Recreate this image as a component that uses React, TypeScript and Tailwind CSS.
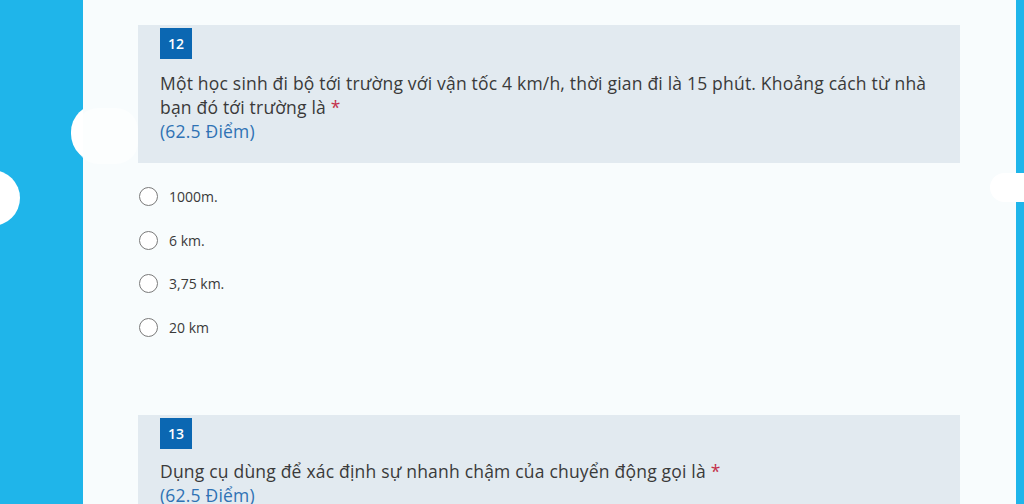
import React from "react";

const font = { fontFamily: '"Open Sans", "Noto Sans", sans-serif' };

function Badge({ n }: { n: string }) {
  return (
    <div className="flex h-[31px] w-[32px] items-center justify-center bg-[#0b67b2] text-[14px] font-semibold text-white">
      {n}
    </div>
  );
}

function Radio({ label }: { label: string }) {
  return (
    <div className="flex h-[43.5px] items-center">
      <div className="ml-[1px] h-[19px] w-[19px] rounded-full border-[1.5px] border-[#7a7a7a] bg-white" />
      <span className="ml-[11px] text-[14px] text-[#3a3a3a]">{label}</span>
    </div>
  );
}

export default function App() {
  return (
    <div
      className="relative flex h-[504px] w-[1024px] overflow-hidden bg-[#1fb5ea]"
      style={font}
    >
      <div className="w-[83px] shrink-0" />
      <div className="relative z-10 w-[933px] shrink-0 bg-[#f8fcfd] pl-[55px] pr-[56px] pt-[25px]">
        <div className="h-[138px] bg-[#e2eaf0] pl-[22px] pt-[3px]">
          <Badge n="12" />
          <div className="mt-[12px] text-[17.5px] leading-[24px] tracking-[0.2px] text-[#3a3a3a]">
            <div className="whitespace-nowrap">
              Một học sinh đi bộ tới trường với vận tốc 4 km/h, thời gian đi là 15 phút. Khoảng cách từ nhà
            </div>
            <div className="whitespace-nowrap">
              bạn đó tới trường là <span className="text-[#c4314b]">*</span>
            </div>
            <div className="text-[#2f72b4]">(62.5 Điểm)</div>
          </div>
        </div>
        <div className="mt-[12px]">
          <Radio label="1000m." />
          <Radio label="6 km." />
          <Radio label="3,75 km." />
          <Radio label="20 km" />
        </div>
        <div className="mt-[66px] h-[200px] bg-[#e2eaf0] pl-[22px] pt-[3px]">
          <Badge n="13" />
          <div className="mt-[10px] text-[17.5px] leading-[24px] tracking-[0.2px] text-[#3a3a3a]">
            <div className="whitespace-nowrap">
              Dụng cụ dùng để xác định sự nhanh chậm của chuyển động gọi là{" "}
              <span className="text-[#c4314b]">*</span>
            </div>
            <div className="text-[#2f72b4]">(62.5 Điểm)</div>
          </div>
        </div>
      </div>
      <div className="w-[8px] shrink-0" />
      {/* clouds */}
      <div className="absolute left-[71px] top-[104px] z-0 h-[58px] w-[70px] rounded-[28px] bg-white" />
      <div className="absolute left-[76px] top-[108px] z-20 h-[56px] w-[62px] rounded-[22px] bg-white/60" />
      <div className="absolute left-[-36px] top-[170px] h-[56px] w-[56px] rounded-full bg-white" />
      <div className="absolute left-[990px] top-[173px] z-20 h-[29px] w-[50px] rounded-full bg-white" />
    </div>
  );
}
